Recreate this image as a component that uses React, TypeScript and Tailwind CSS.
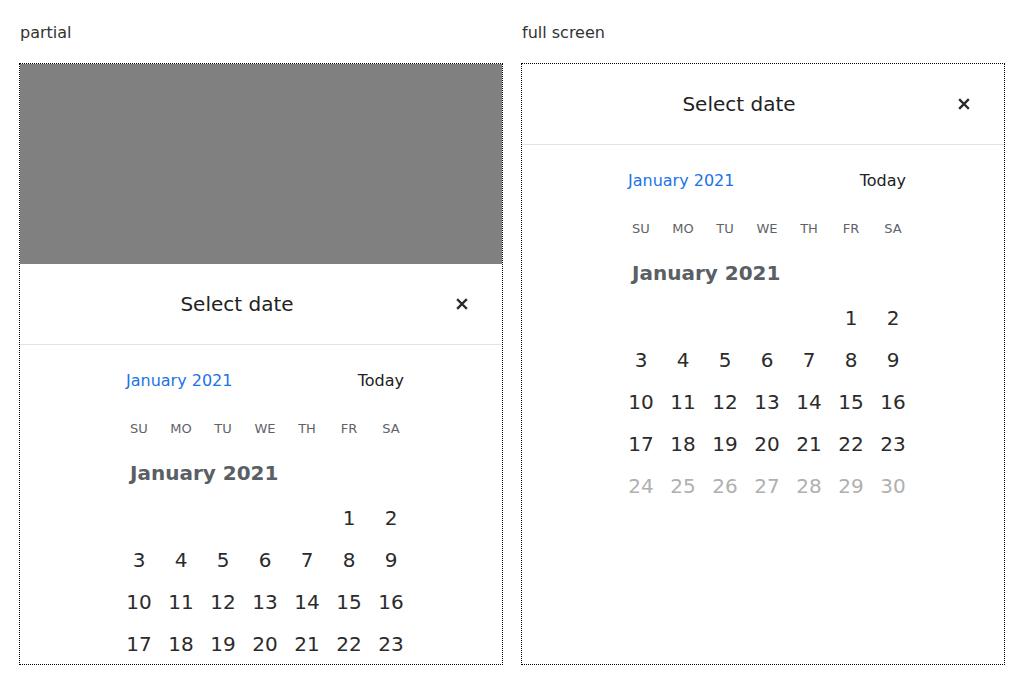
import React from 'react';

const WEEKDAYS = ['SU', 'MO', 'TU', 'WE', 'TH', 'FR', 'SA'];

// January 2021 starts on a Friday
const WEEKS: (number | null)[][] = [
  [null, null, null, null, null, 1, 2],
  [3, 4, 5, 6, 7, 8, 9],
  [10, 11, 12, 13, 14, 15, 16],
  [17, 18, 19, 20, 21, 22, 23],
  [24, 25, 26, 27, 28, 29, 30],
];

function CloseIcon() {
  return (
    <svg width="12" height="12" viewBox="0 0 12 12" className="text-[#2b2b2b]">
      <path d="M2 2L10 10M10 2L2 10" stroke="currentColor" strokeWidth="2.4" strokeLinecap="square" />
    </svg>
  );
}

function DatePanel() {
  return (
    <div className="bg-white">
      {/* Header */}
      <div className="flex items-center h-[81px] px-4 border-b border-[#e4e4e4]">
        <div className="flex-1 text-center text-[20px] text-[#222]">Select date</div>
        <button className="w-12 h-12 flex items-center justify-center">
          <CloseIcon />
        </button>
      </div>

      {/* Calendar */}
      <div className="pl-2">
        <div className="w-[294px] mx-auto">
          <div className="flex items-center justify-between px-2 h-[40px] mt-[16px] text-[16px]">
            <span className="text-[#1a73e8]">January 2021</span>
            <span className="text-[#222]">Today</span>
          </div>

          <div className="grid grid-cols-7 h-[40px] items-center mt-[8px]">
            {WEEKDAYS.map((d) => (
              <div key={d} className="text-center text-[13px] text-[#5f6368]">
                {d}
              </div>
            ))}
          </div>

          <div className="h-[36px] mt-[6px] flex items-center pl-3 text-[20px] font-bold text-[#5a5f66]">
            January 2021
          </div>

          <div className="mt-[6px]">
            {WEEKS.map((week, wi) => (
              <div key={wi} className="grid grid-cols-7 h-[42px] items-center">
                {week.map((day, di) => (
                  <div
                    key={di}
                    className={
                      wi === 4
                        ? 'text-center text-[20px] text-[#b0b0b0]'
                        : 'text-center text-[20px] text-[#2b2b2b]'
                    }
                  >
                    {day ?? ''}
                  </div>
                ))}
              </div>
            ))}
          </div>
        </div>
      </div>
    </div>
  );
}

export default function App() {
  return (
    <div
      className="w-[1024px] h-[684px] bg-white pt-[21px] pl-[19px] flex gap-[18px]"
      style={{ fontFamily: '"DejaVu Sans", sans-serif' }}
    >
      <div className="w-[484px]">
        <div className="h-[24px] leading-[24px] pl-px text-[16px] text-[#333] mb-[18px]">partial</div>
        <div className="h-[602px] border border-dotted border-black overflow-hidden">
          <div className="h-[200px] bg-[#808080]" />
          <DatePanel />
        </div>
      </div>

      <div className="w-[484px]">
        <div className="h-[24px] leading-[24px] pl-px text-[16px] text-[#333] mb-[18px]">full screen</div>
        <div className="h-[602px] border border-dotted border-black overflow-hidden">
          <DatePanel />
        </div>
      </div>
    </div>
  );
}
